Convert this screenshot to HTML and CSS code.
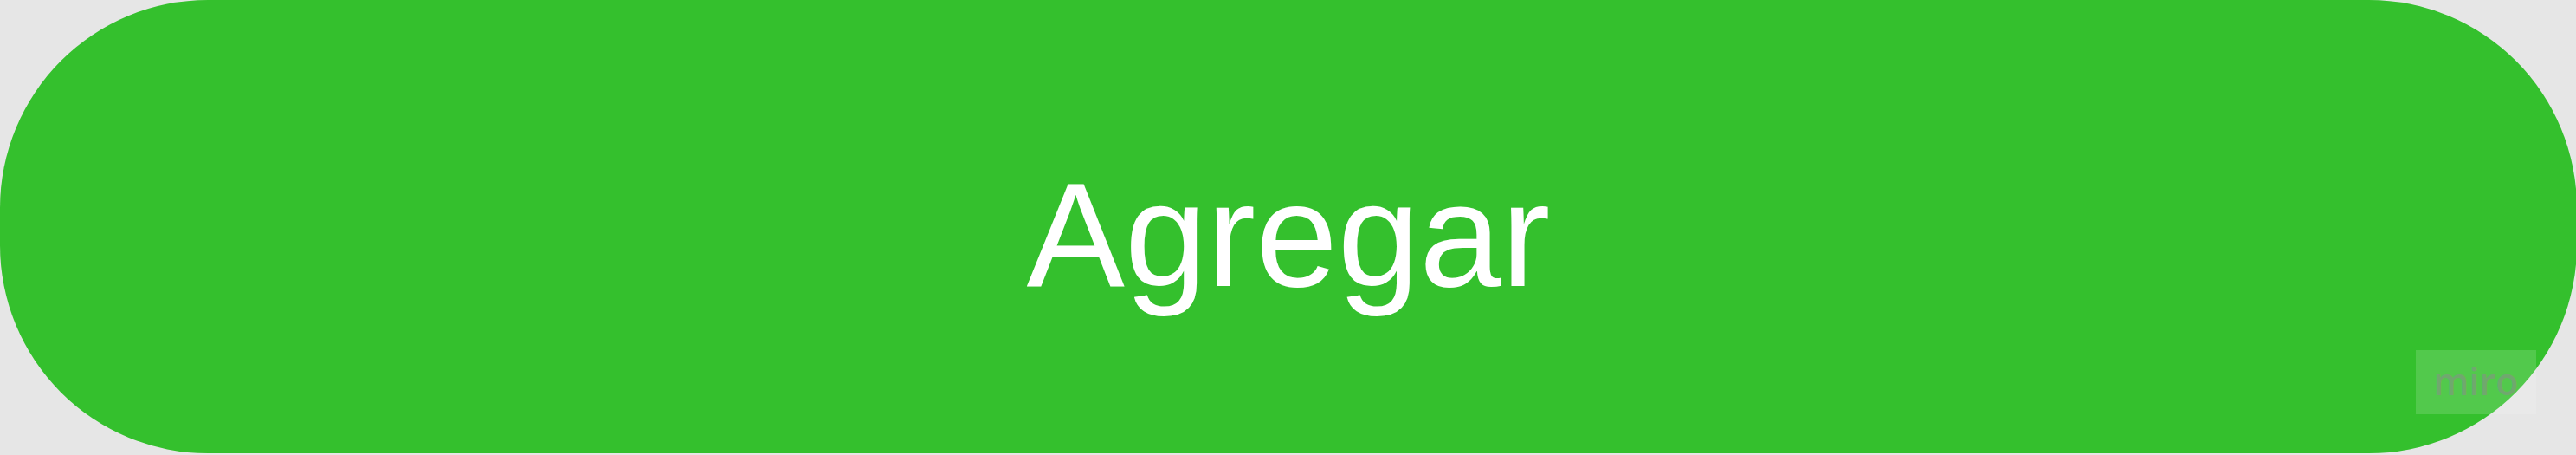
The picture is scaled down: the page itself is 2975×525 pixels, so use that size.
FILE: index.html
```html
<!DOCTYPE html>
<html lang="es">
<head>
<meta charset="utf-8">
<title>Agregar</title>
<link rel="stylesheet" href="styles.css">
</head>
<body>
<div class="stage">
  <button class="btn" type="button"><span class="label">Agregar</span></button>
  <div class="watermark"><span>miro</span></div>
</div>
</body>
</html>
```

FILE: styles.css
```css
html, body {
  margin: 0;
  padding: 0;
  background: #e6e6e6;
  overflow: hidden;
}
.stage {
  position: relative;
  width: 2975px;
  height: 525px;
}
.btn {
  display: flex;
  align-items: center;
  justify-content: center;
  width: 2976px;
  height: 523px;
  margin: 0;
  padding: 18px 0 0 0;
  box-sizing: border-box;
  border: none;
  border-radius: 240px;
  background: #34c02d;
  color: #ffffff;
  font-family: "Liberation Sans", Arial, sans-serif;
  font-size: 170px;
  line-height: normal;
  cursor: pointer;
}
.label {
  display: block;
}
.watermark {
  position: absolute;
  right: 46px;
  bottom: 47px;
  width: 139px;
  height: 74px;
  background: rgba(255, 255, 255, 0.15);
  display: flex;
  align-items: center;
  justify-content: center;
}
.watermark span {
  font-family: "Open Sans", "Noto Sans", sans-serif;
  font-weight: 600;
  font-size: 43px;
  line-height: 1;
  color: rgba(140, 140, 140, 0.55);
  padding-bottom: 4px;
}
```
